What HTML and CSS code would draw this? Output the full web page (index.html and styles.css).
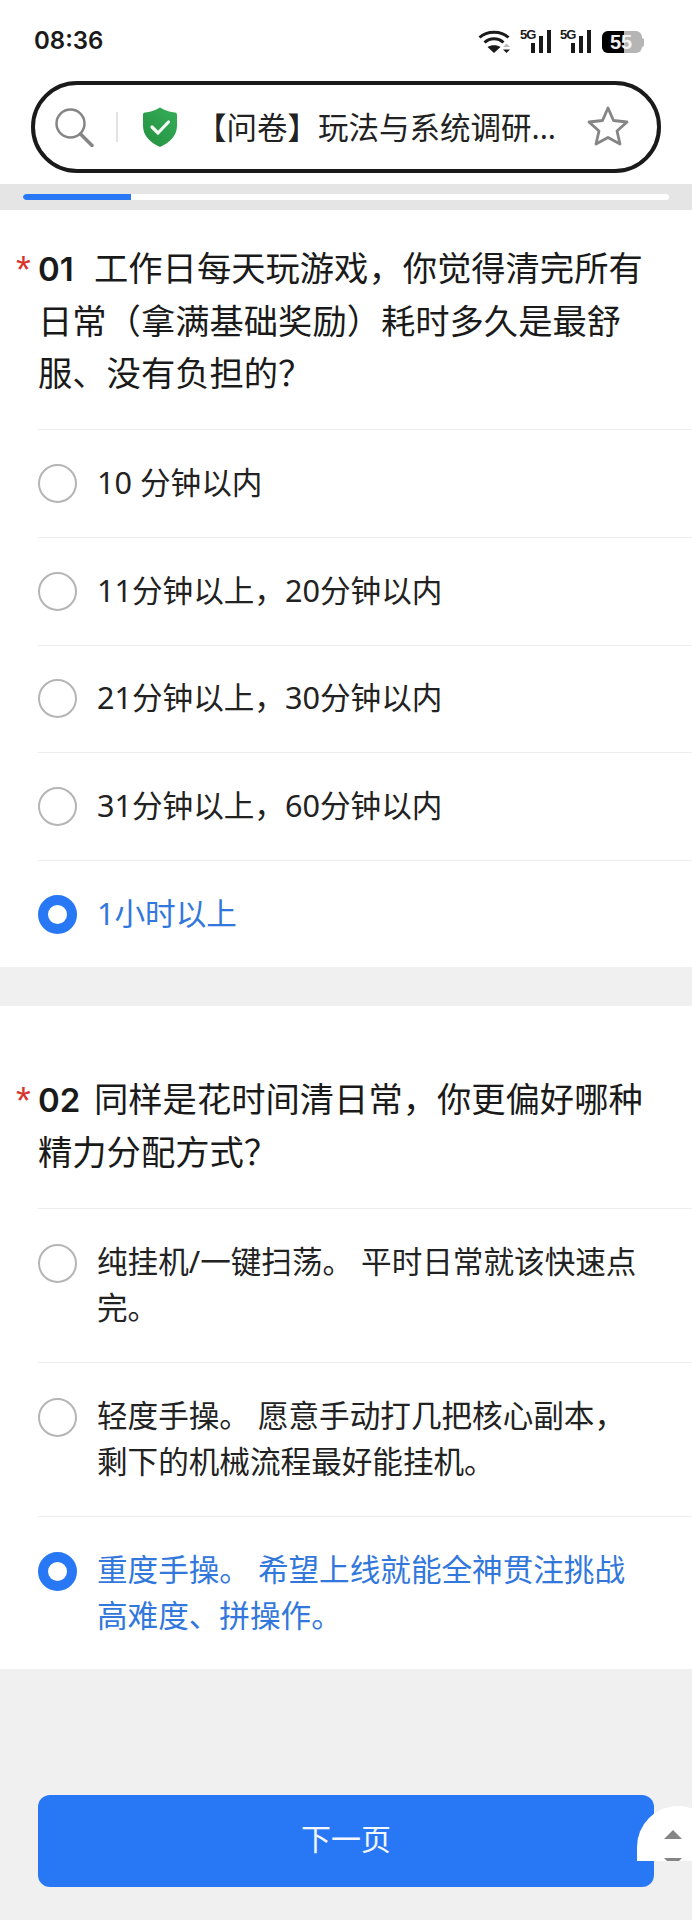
FILE: index.html
```html
<!DOCTYPE html>
<html lang="zh-CN">
<head>
    <meta charset="UTF-8">
    <meta name="viewport" content="width=device-width, initial-scale=1.0">
    <title>问卷</title>
    <link rel="stylesheet" href="styles.css">
</head>
<body>
    <div class="topbar">
        <div class="statusbar">
            <div class="time">08:36</div>
            <div class="status-icons">
                <svg class="wifi" width="33" height="24" viewBox="0 0 33 24">
                    <path d="M1.500 8.500 C9 1.500 23 1.500 30.500 8.500" fill="none" stroke="#1a1a1a" stroke-width="3"/>
                    <path d="M6.500 13.500 C12 8.500 20 8.500 25.500 13.500" fill="none" stroke="#1a1a1a" stroke-width="3"/>
                    <path d="M16 24 L9.500 18 C13 15.500 19 15.500 22.500 18 Z" fill="#1a1a1a"/>
                    <path d="M25 18 L28.500 14.500 L32 18 Z" fill="#bbb"/>
                    <path d="M25 20.500 L32 20.500 L28.500 24 Z" fill="#1a1a1a"/>
                </svg>
                <div class="signal">
                    <span class="signal-label">5G</span>
                    <div class="bars"><i class="b1"></i><i class="b2"></i><i class="b3"></i></div>
                </div>
                <div class="signal">
                    <span class="signal-label">5G</span>
                    <div class="bars"><i class="b1"></i><i class="b2"></i><i class="b3"></i></div>
                </div>
                <div class="battery">
                    <div class="battery-body">
                        <div class="battery-fill"></div>
                        <span class="battery-text">55</span>
                    </div>
                    <div class="battery-nub"></div>
                </div>
            </div>
        </div>

        <div class="urlbar">
            <svg class="search" width="40" height="40" viewBox="0 0 40 40">
                <circle cx="16.500" cy="16.500" r="14" fill="none" stroke="#858585" stroke-width="2.500"/>
                <path d="M26.500 27 L38 38.500" stroke="#858585" stroke-width="3.500" stroke-linecap="round"/>
            </svg>
            <div class="url-divider"></div>
            <svg class="shield" width="36" height="40" viewBox="0 0 36 40">
                <defs>
                    <linearGradient id="shieldGreen" x1="0" y1="1" x2="1" y2="0">
                        <stop offset="0" stop-color="#23903f"/>
                        <stop offset="1" stop-color="#36ae5a"/>
                    </linearGradient>
                </defs>
                <path d="M18 0.500 C23 3.500 28 5 33 5.500 C34.500 5.700 35 6.500 35 8 L35 19 C35 29 27 36 18 40 C9 36 1 29 1 19 L1 8 C1 6.500 1.500 5.700 3 5.500 C8 5 13 3.500 18 0.500 Z" fill="url(#shieldGreen)"/>
                <path d="M10 20 L16 26 L26.500 15" fill="none" stroke="#f4faf5" stroke-width="3.200" stroke-linecap="round" stroke-linejoin="round"/>
            </svg>
            <div class="url-title">【问卷】玩法与系统调研...</div>
            <svg class="star" width="42" height="40" viewBox="0 0 42 40">
                <path d="M21 2 L26.500 14.500 L40 16 L30 25 L33 38 L21 31.500 L9 38 L12 25 L2 16 L15.500 14.500 Z" fill="none" stroke="#858585" stroke-width="2.800" stroke-linejoin="round"/>
            </svg>
        </div>
    </div>

    <div class="progress">
        <div class="progress-track"><div class="progress-value"></div></div>
    </div>

    <div class="question q1">
        <div class="q-title"><span class="req">*</span><span class="q-num">01</span>工作日每天玩游戏，你觉得清完所有日常（拿满基础奖励）耗时多久是最舒服、没有负担的？</div>
        <div class="option"><span class="radio"></span><span class="opt-text">10 分钟以内</span></div>
        <div class="option"><span class="radio"></span><span class="opt-text">11分钟以上，20分钟以内</span></div>
        <div class="option"><span class="radio"></span><span class="opt-text">21分钟以上，30分钟以内</span></div>
        <div class="option"><span class="radio"></span><span class="opt-text">31分钟以上，60分钟以内</span></div>
        <div class="option selected"><span class="radio"></span><span class="opt-text">1小时以上</span></div>
    </div>

    <div class="question q2">
        <div class="q-title"><span class="req">*</span><span class="q-num">02</span>同样是花时间清日常，你更偏好哪种精力分配方式？</div>
        <div class="option tall"><span class="radio"></span><span class="opt-text">纯挂机/一键扫荡。 平时日常就该快速点完。</span></div>
        <div class="option tall"><span class="radio"></span><span class="opt-text">轻度手操。 愿意手动打几把核心副本，剩下的机械流程最好能挂机。</span></div>
        <div class="option tall selected"><span class="radio"></span><span class="opt-text">重度手操。 希望上线就能全神贯注挑战高难度、拼操作。</span></div>
    </div>

    <div class="footer">
        <button class="next-btn">下一页</button>
        <div class="float-btn">
            <svg width="22" height="36" viewBox="0 0 22 36">
                <path d="M11 0 L20 9 L2 9 Z" fill="#858585"/>
                <path d="M2 28 L20 28 L11 37 Z" fill="#858585"/>
            </svg>
        </div>
    </div>
</body>
</html>
```

FILE: styles.css
```css
* {
    box-sizing: border-box;
}

body {
    margin: 0;
    width: 692px;
    height: 1920px;
    overflow: hidden;
    background-color: #F0F0F0;
    color: #1a1a1a;
    font-family: "Noto Sans", "Noto Sans CJK SC", sans-serif;
}

.topbar {
    height: 184px;
    background-color: #fff;
}

.statusbar {
    height: 81px;
    padding: 24px 48px 0 34px;
    display: flex;
    justify-content: space-between;
    align-items: flex-start;
}

.time {
    font-family: Inter, sans-serif;
    font-size: 24px;
    line-height: 34px;
    font-weight: 600;
}

.status-icons {
    display: flex;
    align-items: flex-start;
    gap: 9px;
    padding-top: 5px;
}

.signal {
    width: 31px;
    height: 24px;
    position: relative;
}

.signal-label {
    position: absolute;
    left: 0;
    top: -1px;
    font-family: "Liberation Sans", sans-serif;
    font-size: 13px;
    line-height: 13px;
    font-weight: bold;
    letter-spacing: -1px;
}

.bars {
    height: 24px;
    display: flex;
    justify-content: flex-end;
    align-items: flex-end;
    gap: 4px;
}

.bars i {
    width: 4px;
    background-color: #1a1a1a;
}

.bars .b1 {
    height: 10px;
}

.bars .b2 {
    height: 17px;
}

.bars .b3 {
    height: 23px;
}

.battery {
    width: 42px;
    height: 22px;
    margin-top: 2px;
    margin-left: 2px;
    display: flex;
    align-items: center;
}

.battery-body {
    width: 40px;
    height: 22px;
    border-radius: 6px;
    background-color: #b5b5b5;
    position: relative;
    overflow: hidden;
}

.battery-nub {
    width: 2px;
    height: 9px;
    border-radius: 0 2px 2px 0;
    background-color: #b5b5b5;
}

.battery-fill {
    width: 22px;
    height: 100%;
    background-color: #000;
}

.battery-text {
    position: absolute;
    left: 8px;
    top: 0;
    font-family: "Liberation Sans", sans-serif;
    font-size: 20px;
    line-height: 22px;
    font-weight: bold;
    color: #f2f2f2;
}

.urlbar {
    height: 92px;
    margin: 0 31px;
    border: 4px solid #1a1a1a;
    border-radius: 46px;
    background-color: #fff;
    display: flex;
    align-items: center;
    padding-left: 19px;
}

.search {
    flex: none;
}

.url-divider {
    width: 2px;
    height: 30px;
    margin-left: 22px;
    background-color: #e2e2e2;
}

.shield {
    flex: none;
    margin-left: 24px;
}

.url-title {
    width: 376px;
    margin-left: 18px;
    padding-bottom: 2px;
    font-size: 30.500px;
    white-space: nowrap;
    color: #222;
}

.star {
    flex: none;
    margin-left: 15px;
    margin-top: -2px;
}

.progress {
    height: 26px;
    padding: 10px 23px;
    background-color: #E5E5E5;
}

.progress-track {
    height: 6px;
    border-radius: 3px;
    background-color: #fff;
    overflow: hidden;
}

.progress-value {
    width: 108px;
    height: 100%;
    border-radius: 3px 0 0 3px;
    background-color: #2878F5;
}

.question {
    background-color: #fff;
    padding-left: 38px;
}

.q1 {
    height: 757px;
    padding-top: 32px;
}

.q2 {
    height: 663px;
    margin-top: 39px;
    padding-top: 67px;
}

.q-title {
    width: 612px;
    font-size: 34.300px;
    line-height: 52px;
    padding-bottom: 30px;
    color: #1a1a1a;
}

.req {
    display: inline-block;
    width: 23px;
    margin-left: -22px;
    margin-right: -1px;
    vertical-align: -2px;
    color: #D9342B;
    font-family: "Liberation Sans", sans-serif;
    font-size: 38px;
    line-height: 38px;
}

.q-num {
    display: inline-block;
    width: 56px;
    font-family: Inter, sans-serif;
    font-weight: 600;
    font-size: 33px;
}

.option {
    height: 107.800px;
    border-top: 1px solid #EDEDED;
    display: flex;
    align-items: center;
    gap: 20px;
}

.option.tall {
    height: 154px;
}

.radio {
    flex: none;
    width: 39px;
    height: 39px;
    border: 2px solid #B5B5B5;
    border-radius: 50%;
    background-color: #fff;
}

.opt-text {
    width: 540px;
    padding-bottom: 3px;
    font-size: 30.600px;
    line-height: 46px;
    color: #222;
}

.tall .radio {
    align-self: flex-start;
    margin-top: 35px;
}

.selected .radio {
    border: 10px solid #2878F5;
}

.selected .opt-text {
    color: #3278DC;
}

.footer {
    margin: 126px 0 0 38px;
    width: 616px;
    position: relative;
}

.next-btn {
    width: 100%;
    height: 92px;
    padding-bottom: 9px;
    border: none;
    border-radius: 12px;
    background-color: #2878F5;
    color: #f2f6fe;
    font-family: "Noto Sans", "Noto Sans CJK SC", sans-serif;
    font-size: 30px;
}

.float-btn {
    position: absolute;
    left: 599px;
    top: 11px;
    width: 82px;
    height: 55px;
    border-radius: 41px 41px 0 0;
    background-color: #fff;
    overflow: hidden;
    padding: 24px 0 0 25px;
}
```
